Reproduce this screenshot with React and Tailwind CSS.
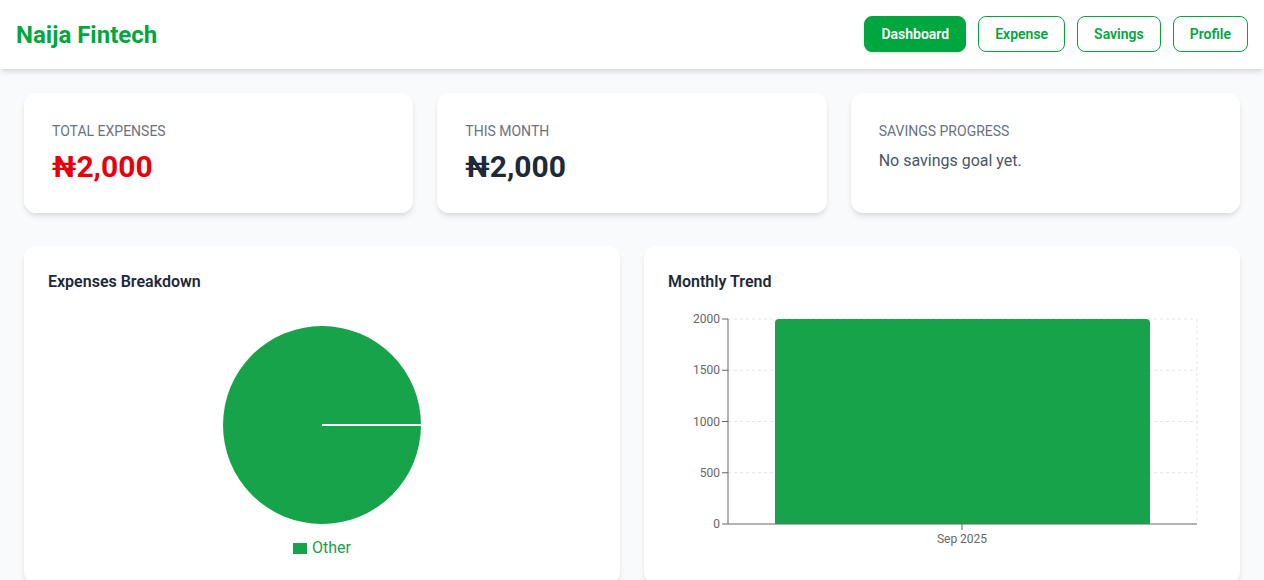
import React from 'react';

const navItems = ['Dashboard', 'Expense', 'Savings', 'Profile'];

const StatCard = ({ label, children }) => (
  <div className="bg-white rounded-xl shadow-md p-7">
    <p className="text-sm text-gray-500 uppercase">{label}</p>
    <div className="mt-2">{children}</div>
  </div>
);

const PieChart = () => (
  <div>
    <svg width="548" height="228" className="block">
      <circle cx="274" cy="115" r="99" fill="#16a34a" />
      <line x1="274" y1="115" x2="373" y2="115" stroke="#fff" strokeWidth="2" />
    </svg>
    <div className="flex items-center justify-center gap-[5px] h-5">
      <span className="w-[14px] h-[11px] bg-[#16a34a]"></span>
      <span className="text-base text-[#16a34a] leading-5">Other</span>
    </div>
  </div>
);

const BarChart = () => {
  const ticks = [
    { v: '2000', y: 9 },
    { v: '1500', y: 60.25 },
    { v: '1000', y: 111.5 },
    { v: '500', y: 162.75 },
    { v: '0', y: 214 }
  ];
  return (
    <svg width="548" height="250" className="block">
      {/* grid */}
      {ticks.slice(0, 4).map((t) => (
        <line key={t.v} x1="60" x2="529" y1={t.y} y2={t.y} stroke="#e5e5e5" strokeDasharray="3 3" />
      ))}
      <line x1="529" x2="529" y1="9" y2="214" stroke="#e5e5e5" strokeDasharray="3 3" />
      {/* bar */}
      <path d="M107 214 V13 Q107 9 111 9 H478 Q482 9 482 13 V214 Z" fill="#16a34a" />
      {/* y axis */}
      <line x1="60" x2="60" y1="9" y2="214" stroke="#666" />
      {ticks.map((t) => (
        <g key={t.v}>
          <line x1="54" x2="60" y1={t.y} y2={t.y} stroke="#666" />
          <text x="52" y={t.y + 4} textAnchor="end" fontSize="12" fill="#666">{t.v}</text>
        </g>
      ))}
      {/* x axis */}
      <line x1="60" x2="529" y1="214" y2="214" stroke="#666" />
      <line x1="294" x2="294" y1="214" y2="220" stroke="#666" />
      <text x="294" y="233" textAnchor="middle" fontSize="12" fill="#666">Sep 2025</text>
    </svg>
  );
};

export default function App() {
  return (
    <div className="min-h-screen bg-gray-50 font-['Roboto',sans-serif]">
      <header className="bg-white shadow-md">
        <div className="flex items-center justify-between px-4 pt-4 pb-[17px]">
          <h1 className="text-2xl font-bold text-green-600 pt-0.5">Naija Fintech</h1>
          <nav className="flex gap-3">
            {navItems.map((item, i) => (
              <button
                key={item}
                className={
                  i === 0
                    ? 'px-4 h-9 rounded-lg text-sm font-semibold border border-green-600 bg-green-600 text-white shadow'
                    : 'px-4 h-9 rounded-lg text-sm font-semibold border border-green-600 bg-white text-green-600'
                }
              >
                {item}
              </button>
            ))}
          </nav>
        </div>
      </header>

      <main className="p-6">
        <div className="grid grid-cols-3 gap-6">
          <StatCard label="Total Expenses">
            <p className="text-3xl font-bold text-red-600">₦2,000</p>
          </StatCard>
          <StatCard label="This Month">
            <p className="text-3xl font-bold text-gray-800">₦2,000</p>
          </StatCard>
          <StatCard label="Savings Progress">
            <p className="text-base text-gray-600">No savings goal yet.</p>
          </StatCard>
        </div>

        <div className="grid grid-cols-2 gap-6 mt-[33px]">
          <div className="bg-white rounded-xl shadow-md p-6">
            <h2 className="text-base font-semibold text-gray-800 mb-4">Expenses Breakdown</h2>
            <PieChart />
          </div>
          <div className="bg-white rounded-xl shadow-md p-6">
            <h2 className="text-base font-semibold text-gray-800 mb-4">Monthly Trend</h2>
            <BarChart />
          </div>
        </div>
      </main>
    </div>
  );
}
